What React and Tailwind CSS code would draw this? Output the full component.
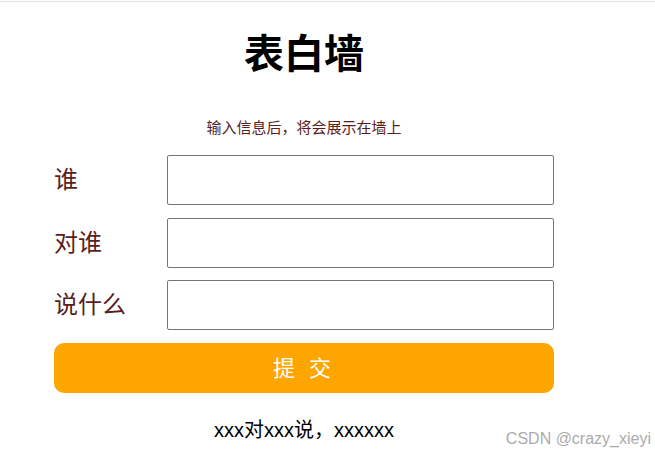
import React, { useState } from "react";

const cjk = { fontFamily: '"Liberation Sans", "Noto Sans CJK SC", sans-serif' };

export default function App() {
  const [from, setFrom] = useState("");
  const [to, setTo] = useState("");
  const [msg, setMsg] = useState("");

  // fields of the form: label + value + setter
  const fields = [
    { label: "谁", value: from, set: setFrom },
    { label: "对谁", value: to, set: setTo },
    { label: "说什么", value: msg, set: setMsg },
  ];

  return (
    <div className="relative w-[655px] h-[458px] bg-white overflow-hidden" style={cjk}>
      <div className="h-px" />
      <div className="h-px bg-[#e3e3e3]" />

      <div className="ml-[54px] w-[500px] flex flex-col">
        <h1 className="mt-[32px] h-[40px] text-[40px] leading-[40px] font-bold text-center text-black">
          表白墙
        </h1>
        <p className="mt-[44px] h-[20px] text-[15px] leading-[20px] text-center text-[#5a1e1e]">
          输入信息后，将会展示在墙上
        </p>

        <div className="mt-[17px] flex flex-col gap-[12.5px]">
          {fields.map((f) => (
            <div key={f.label} className="flex items-center h-[50px]">
              <label className="w-[113px] text-[24px] leading-[30px] text-[#5a1e1e]">
                {f.label}
              </label>
              <input
                type="text"
                className="w-[387px] h-[50px] border border-[#767676] rounded-[2px] px-2 text-[20px] outline-none"
                value={f.value}
                onChange={(e) => f.set(e.target.value)}
              />
            </div>
          ))}
        </div>

        <button
          type="button"
          className="mt-[13px] h-[50px] w-[500px] rounded-[10px] bg-[#ffa500] text-white text-[22px] tracking-[4px]"
        >
          提 交
        </button>

        <div className="mt-[25px] h-[24px] text-[20px] leading-[24px] text-center text-black">
          {(from || "xxx") + "对" + (to || "xxx") + "说，" + (msg || "xxxxxx")}
        </div>
      </div>

      <div className="absolute right-[4px] top-[429px] text-[16px] leading-[20px] text-[#ababab]">
        CSDN @crazy_xieyi
      </div>
    </div>
  );
}
